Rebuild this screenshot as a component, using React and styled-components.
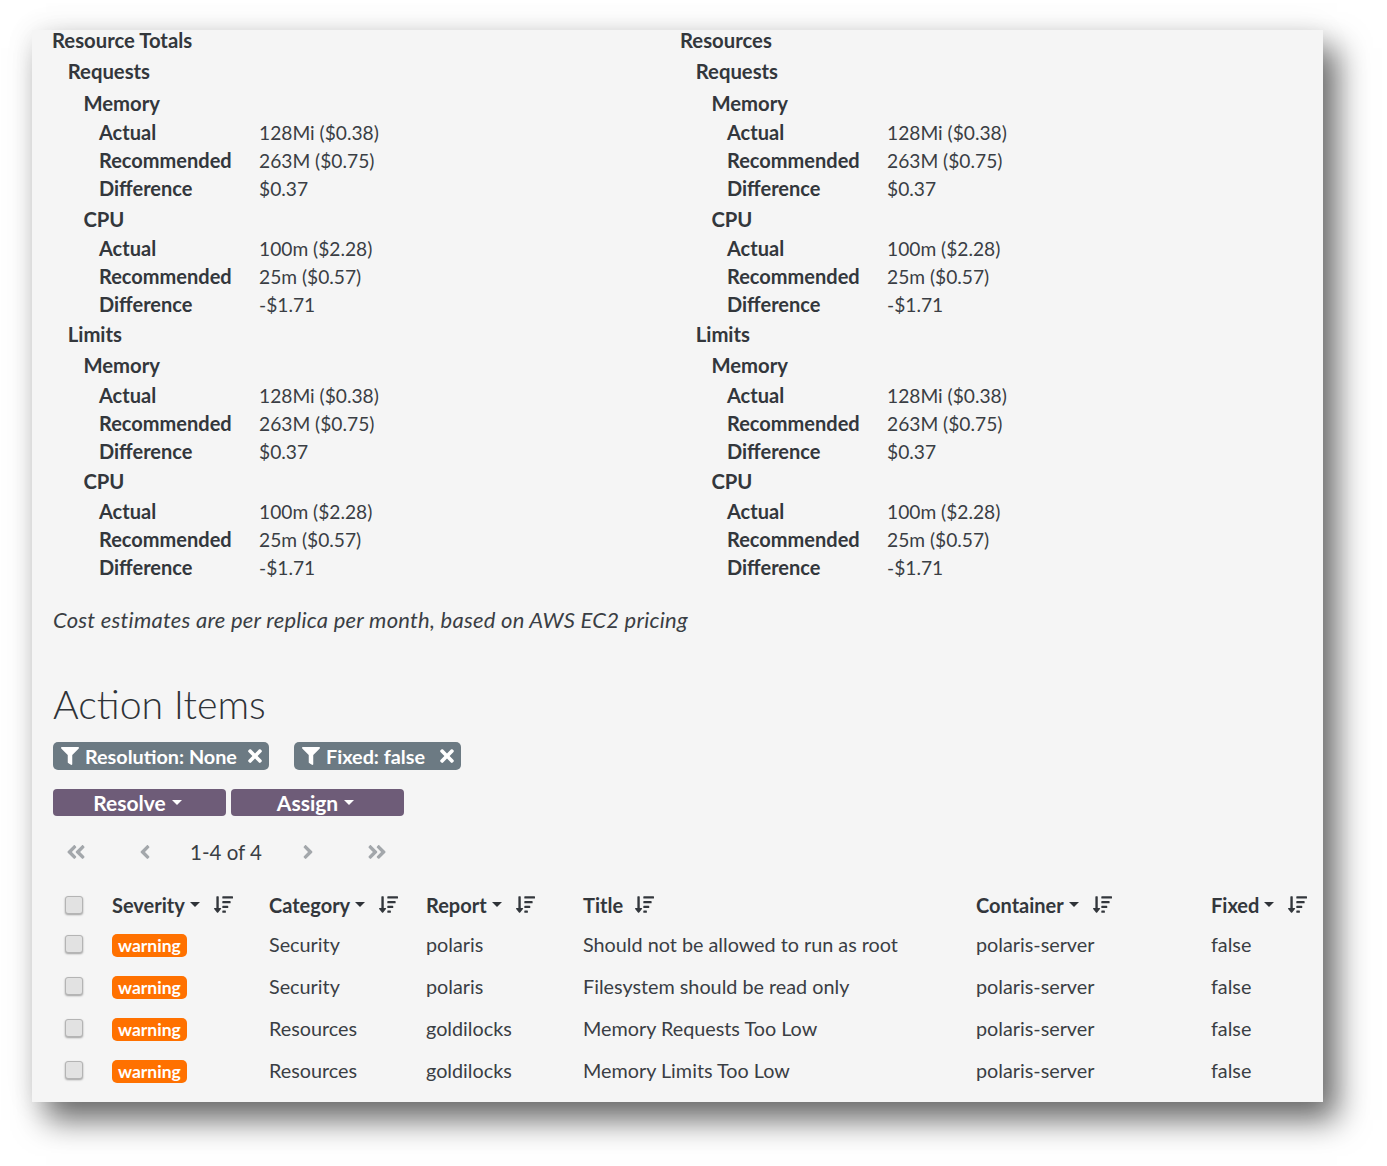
import React from "react";
import styled, { createGlobalStyle } from "styled-components";
import { FaFilter, FaTimes, FaSortAmountDown, FaAngleDoubleLeft, FaAngleDoubleRight, FaAngleLeft, FaAngleRight } from "react-icons/fa";

const Global = createGlobalStyle`
  html, body { margin: 0; padding: 0; background: #fff; }
  body { font-family: "Lato", "Open Sans", sans-serif; color: #2f3338; font-size: 20px; }
  #root { width: 1387px; height: 1166px; overflow: hidden; }
`;
const Page = styled.div`
  padding: 30px 64px 0 32px;
`;
const Panel = styled.div`
  display: flow-root;
  background: #f5f5f5;
  height: 1072px;
  box-sizing: border-box;
  padding: 0 10px 0 21px;
  box-shadow: 14px 18px 30px rgba(0, 0, 0, 0.58), 0 0 30px rgba(0, 0, 0, 0.07);
`;
const Columns = styled.div`
  display: grid;
  grid-template-columns: 628px 1fr;
  margin: -3px 0 0 -1px;
`;
const Head = styled.div`
  font-weight: 700;
  font-size: 20.3px;
  line-height: 24px;
  padding-left: ${p => p.$level * 15.7}px;
  margin-top: ${p => p.$top}px;
  margin-bottom: ${p => (p.$level === 2 ? 3.5 : 0)}px;
  color: #33373c;
`;
const Row = styled.div`
  display: grid;
  grid-template-columns: 160px 1fr;
  align-items: baseline;
  padding-left: 47px;
  height: 28px;
  line-height: 28px;
`;
const RowLabel = styled.span`
  font-weight: 700;
  font-size: 20px;
  color: #33373c;
`;
const RowValue = styled.span`
  font-size: 19.2px;
  color: #3a3e44;
`;
const Note = styled.p`
  margin: 25.5px 0 0;
  font-style: italic;
  font-size: 22px;
  letter-spacing: 0.24px;
  line-height: 28px;
  color: #3a3e44;
`;
const Title = styled.h2`
  margin: 47px 0 0;
  font-weight: 300;
  font-size: 39.3px;
  line-height: 46px;
  color: #2f3338;
`;
const Filters = styled.div`
  display: flex;
  gap: 25px;
  margin-top: 15px;
`;
const Chip = styled.div`
  display: flex;
  align-items: center;
  box-sizing: border-box;
  width: ${p => p.$width}px;
  height: 28px;
  border-radius: 5px;
  background: #6c7a83;
  color: #fff;
  font-weight: 700;
  font-size: 19.8px;
  padding: 0 4px 0 8px;
  gap: 6px;
  & > svg:last-child { margin-left: auto; font-size: 20px; }
  & > svg:first-child { font-size: 18px; }
`;
const Actions = styled.div`
  display: flex;
  gap: 5px;
  margin-top: 19px;
`;
const ActionButton = styled.div`
  display: flex;
  align-items: center;
  justify-content: center;
  gap: 6px;
  box-sizing: border-box;
  width: 173px;
  height: 27px;
  padding-right: 4px;
  border-radius: 4px;
  background: #6e5c78;
  color: #fff;
  font-weight: 700;
  font-size: 21px;
`;
const Caret = styled.span`
  display: inline-block;
  width: 0;
  height: 0;
  margin-top: -1px;
  border-left: 5.5px solid transparent;
  border-right: 5.5px solid transparent;
  border-top: 5.5px solid ${p => (p.$light ? "#fff" : "#2f3338")};
`;
const Pager = styled.div`
  display: grid;
  grid-template-columns: 69px 56px 107px 69px 50px;
  align-items: center;
  height: 30px;
  margin-top: 21px;
  padding-left: 12px;
  font-size: 20.5px;
  color: #3a3e44;
  & > svg { color: #a3a7ab; font-size: 22px; }
`;
const Table = styled.div`
  margin-top: 19px;
  display: grid;
  grid-template-columns: 59px 157px 157px 157px 393px 235px 97px;
  grid-template-rows: 37px;
  grid-auto-rows: 42px;
  align-items: center;
`;
const CheckCell = styled.div`
  padding-left: 12px;
  display: flex;
  align-items: center;
`;
const Check = styled.span`
  display: block;
  box-sizing: border-box;
  width: 18px;
  height: 18px;
  border-radius: 3px;
  background: #e2e2e2;
  border: 1px solid #b4b4b4;
  box-shadow: 0 1px 2px rgba(0, 0, 0, 0.35);
`;
const HeadCell = styled.div`
  display: flex;
  align-items: center;
  font-weight: 700;
  font-size: 20px;
  color: #33373c;
  & > span:first-child { margin-right: 5px; }
  & > svg { margin-left: ${p => p.$gap}px; font-size: 19px; flex-shrink: 0; }
`;
const Cell = styled.div`
  font-size: 19.8px;
  color: #3a3e44;
`;
const Badge = styled.span`
  display: inline-block;
  height: 23px;
  line-height: 24px;
  padding: 0 6px;
  border-radius: 5px;
  background: #ff7100;
  color: #fff;
  font-weight: 700;
  font-size: 17.5px;
  vertical-align: middle;
`;

const Block = () => (
  <>
    <Head $level={2} $top={7.5}>Memory</Head>
    <Row><RowLabel>Actual</RowLabel><RowValue>128Mi ($0.38)</RowValue></Row>
    <Row><RowLabel>Recommended</RowLabel><RowValue>263M ($0.75)</RowValue></Row>
    <Row><RowLabel>Difference</RowLabel><RowValue>$0.37</RowValue></Row>
    <Head $level={2} $top={4.5}>CPU</Head>
    <Row><RowLabel>Actual</RowLabel><RowValue>100m ($2.28)</RowValue></Row>
    <Row><RowLabel>Recommended</RowLabel><RowValue>25m ($0.57)</RowValue></Row>
    <Row><RowLabel>Difference</RowLabel><RowValue>-$1.71</RowValue></Row>
  </>
);
const Totals = ({ title }) => (
  <div>
    <Head $level={0} $top={1}>{title}</Head>
    <Head $level={1} $top={7}>Requests</Head>
    <Block />
    <Head $level={1} $top={3.5}>Limits</Head>
    <Block />
  </div>
);
const items = [
  ["Security", "polaris", "Should not be allowed to run as root"],
  ["Security", "polaris", "Filesystem should be read only"],
  ["Resources", "goldilocks", "Memory Requests Too Low"],
  ["Resources", "goldilocks", "Memory Limits Too Low"],
];
const Header = ({ label, caret = true }) => (
  <HeadCell $gap={caret ? 14 : 7}>
    <span>{label}</span>
    {caret && <Caret />}
    <FaSortAmountDown />
  </HeadCell>
);

export default function App() {
  return (
    <>
      <Global />
      <Page>
        <Panel>
          <Columns>
            <Totals title="Resource Totals" />
            <Totals title="Resources" />
          </Columns>
          <Note>Cost estimates are per replica per month, based on AWS EC2 pricing</Note>
          <Title>Action Items</Title>
          <Filters>
            <Chip $width={216}><FaFilter /><span>Resolution: None</span><FaTimes /></Chip>
            <Chip $width={167}><FaFilter /><span>Fixed: false</span><FaTimes /></Chip>
          </Filters>
          <Actions>
            <ActionButton>Resolve <Caret $light /></ActionButton>
            <ActionButton>Assign <Caret $light /></ActionButton>
          </Actions>
          <Pager>
            <FaAngleDoubleLeft />
            <FaAngleLeft />
            <span>1-4 of 4</span>
            <FaAngleRight />
            <FaAngleDoubleRight />
          </Pager>
          <Table>
            <CheckCell><Check /></CheckCell>
            <Header label="Severity" />
            <Header label="Category" />
            <Header label="Report" />
            <Header label="Title" caret={false} />
            <Header label="Container" />
            <Header label="Fixed" />
            {items.map(([cat, rep, title]) => (
              <React.Fragment key={title}>
                <CheckCell><Check /></CheckCell>
                <Cell><Badge>warning</Badge></Cell>
                <Cell>{cat}</Cell>
                <Cell>{rep}</Cell>
                <Cell>{title}</Cell>
                <Cell>polaris-server</Cell>
                <Cell>false</Cell>
              </React.Fragment>
            ))}
          </Table>
        </Panel>
      </Page>
    </>
  );
}
